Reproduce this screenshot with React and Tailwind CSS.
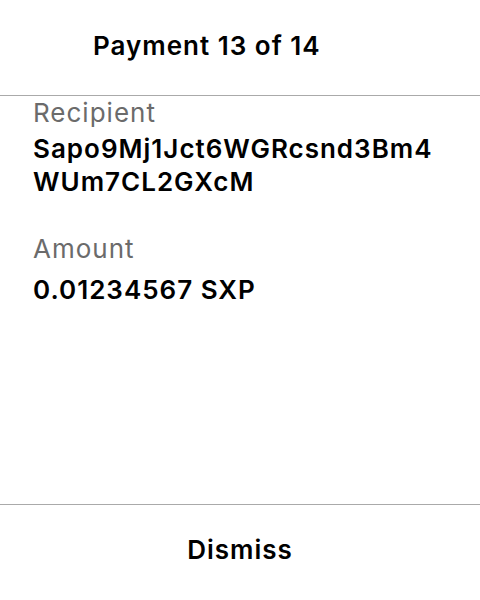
import React from "react";

const App = () => {
  return (
    <div
      className="w-[480px] h-[600px] flex flex-col bg-white text-black tracking-[1px]"
      style={{ fontFamily: "Inter, 'Noto Sans', sans-serif" }}
    >
      <div className="h-[96px] shrink-0 border-b border-[#aaaaaa] pl-[93px] pt-[30px]">
        <h1 className="text-[26px] leading-[32px] font-semibold">Payment 13 of 14</h1>
      </div>
      <div className="flex-1 px-[33px] pt-[1px]">
        <div>
          <div className="text-[26px] leading-[32px] text-[#6b6b6b]">Recipient</div>
          <div className="mt-[3px] text-[26px] leading-[33px] font-semibold">
            <div>Sapo9Mj1Jct6WGRcsnd3Bm4</div>
            <div>WUm7CL2GXcM</div>
          </div>
        </div>
        <div className="mt-[35px]">
          <div className="text-[26px] leading-[32px] text-[#6b6b6b]">Amount</div>
          <div className="mt-[8px] text-[26px] leading-[33px] font-semibold">
            0.01234567 SXP
          </div>
        </div>
      </div>
      <div className="h-[96px] shrink-0 border-t border-[#aaaaaa] pt-[29px] text-center">
        <button className="text-[26px] leading-[32px] font-semibold tracking-[1px]">Dismiss</button>
      </div>
    </div>
  );
};

export default App;
